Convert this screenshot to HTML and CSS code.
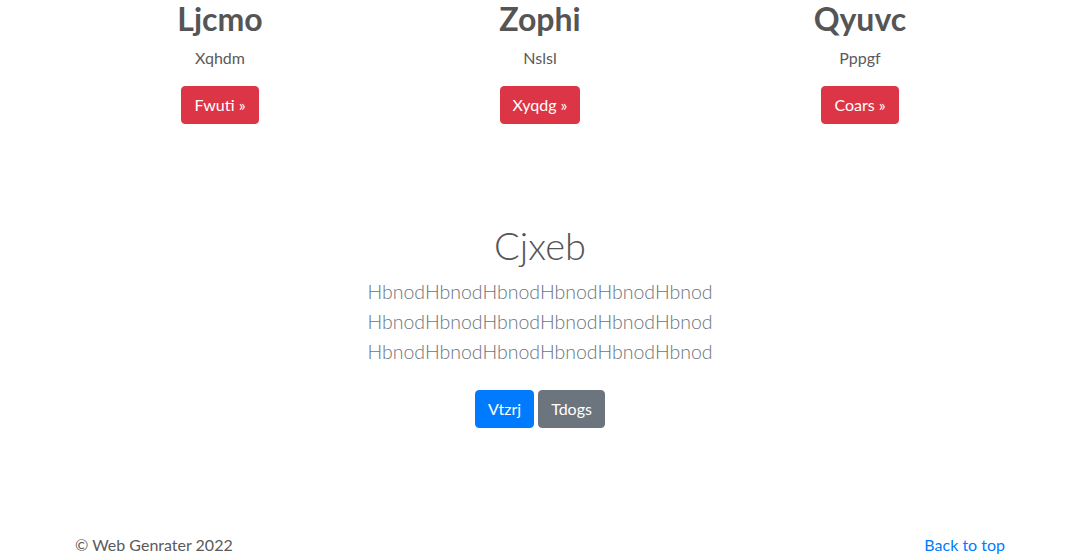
FILE: index.html
```html
<!DOCTYPE html>
<html lang="en">
<head>
<meta charset="utf-8">
<title>Web Genrater</title>
<link rel="stylesheet" href="styles.css">
</head>
<body>
<div class="container">
  <div class="row">
    <div class="col">
      <h2 class="col-title">Ljcmo</h2>
      <p class="col-text">Xqhdm</p>
      <p class="col-action"><a class="btn btn-danger" href="#">Fwuti »</a></p>
    </div>
    <div class="col">
      <h2 class="col-title">Zophi</h2>
      <p class="col-text">Nslsl</p>
      <p class="col-action"><a class="btn btn-danger" href="#">Xyqdg »</a></p>
    </div>
    <div class="col">
      <h2 class="col-title">Qyuvc</h2>
      <p class="col-text">Pppgf</p>
      <p class="col-action"><a class="btn btn-danger" href="#">Coars »</a></p>
    </div>
  </div>
</div>

<section class="hero">
  <h1 class="hero-title">Cjxeb</h1>
  <p class="lead">HbnodHbnodHbnodHbnodHbnodHbnod<br>HbnodHbnodHbnodHbnodHbnodHbnod<br>HbnodHbnodHbnodHbnodHbnodHbnod</p>
  <div class="hero-actions">
    <a class="btn btn-primary" href="#">Vtzrj</a>
    <a class="btn btn-secondary" href="#">Tdogs</a>
  </div>
</section>

<footer class="container footer">
  <p class="footer-copy">© Web Genrater 2022</p>
  <p class="footer-top"><a href="#">Back to top</a></p>
</footer>
</body>
</html>
```
FILE: styles.css
```css
html, body {
  margin: 0;
  padding: 0;
}
body {
  font-family: "Lato", "Open Sans", sans-serif;
  font-size: 16px;
  line-height: 1.5;
  color: #5a5a5a;
  background: #fff;
}
.container {
  width: 960px;
  margin: 0 auto;
  padding: 0 15px;
  box-sizing: border-box;
}
.row {
  display: grid;
  grid-template-columns: repeat(3, 1fr);
  margin: 0 -15px;
}
.col {
  padding: 0 15px;
  text-align: center;
}
.col-title {
  font-size: 32px;
  font-weight: 700;
  line-height: 1.2;
  margin: 0 0 8px;
  color: #555;
}
.col-text {
  margin: 0 0 16px;
}
.col-action {
  margin: 0 0 16px;
  line-height: 38px;
  height: 38px;
}
.btn {
  display: inline-block;
  padding: 6px 12px;
  border: 1px solid transparent;
  border-radius: 4px;
  font-size: 16px;
  line-height: 24px;
  color: #fff;
  text-decoration: none;
  vertical-align: top;
}
.btn-danger {
  background: #dc3545;
  border-color: #dc3545;
}
.btn-primary {
  background: #007bff;
  border-color: #007bff;
}
.btn-secondary {
  background: #6c757d;
  border-color: #6c757d;
}
.hero {
  padding: 81px 0 0;
  text-align: center;
}
.hero-title {
  font-size: 38px;
  font-weight: 300;
  line-height: 48px;
  margin: 0 0 8px;
  color: #555;
}
.lead {
  font-size: 19.5px;
  font-weight: 300;
  line-height: 30px;
  color: #6c757d;
  margin: 0 0 23px;
}
.hero-actions {
  display: flex;
  justify-content: center;
  gap: 4px;
}
.footer {
  display: flex;
  justify-content: space-between;
  margin-top: 105px;
}
.footer p {
  margin: 0;
}
.footer a {
  color: #007bff;
  text-decoration: none;
}
```
